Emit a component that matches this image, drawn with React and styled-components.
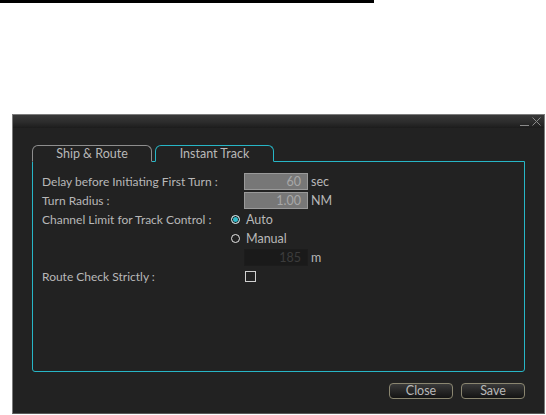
import React from "react";
import styled, { createGlobalStyle } from "styled-components";

const Global = createGlobalStyle`
  html, body { margin: 0; padding: 0; background: #ffffff; }
  body { font-family: Lato, "Noto Sans", sans-serif; }
`;

const Page = styled.div`
  width: 546px;
  height: 415px;
  display: flex;
  flex-direction: column;
`;

const TopRule = styled.div`
  width: 374px;
  height: 3px;
  background: #000;
`;

const Dialog = styled.div`
  margin: 111px 0 0 12px;
  width: 533px;
  height: 300px;
  box-sizing: border-box;
  border: 1px solid #7c7c7c;
  border-bottom-color: #5a5a5a;
  background: #222222;
  display: flex;
  flex-direction: column;
`;

const TitleBar = styled.div`
  height: 14px;
  background: linear-gradient(#383838, #2c2c2c 55%, #1c1c1c);
  display: flex;
  justify-content: flex-end;
  align-items: flex-end;
  gap: 3px;
  padding-right: 3px;
`;

const WinIcon = styled.svg`
  display: block;
  margin-bottom: 2px;
`;

const Body = styled.div`
  flex: 1;
  display: flex;
  flex-direction: column;
  padding: 17px 19px 14px 19px;
`;

const Tabs = styled.div`
  display: flex;
  gap: 3px;
  margin-bottom: -1px;
  position: relative;
  z-index: 1;
`;

const Tab = styled.div`
  width: ${(p) => p.$w}px;
  height: 15px;
  box-sizing: content-box;
  border: 1px solid ${(p) => (p.$active ? "#27b6c6" : "#8e8e8e")};
  border-bottom: 1px solid ${(p) => (p.$active ? "#222222" : "transparent")};
  border-radius: 6px 6px 0 0;
  background: #222222;
  color: #b8b8b8;
  font-size: 12.5px;
  line-height: 16px;
  text-align: center;
`;

const Panel = styled.div`
  height: 211px;
  box-sizing: border-box;
  border: 1px solid #27b6c6;
  border-radius: 0 0 3px 3px;
  padding: 10px 0 0 9px;
  display: flex;
  flex-direction: column;
`;

const Row = styled.div`
  display: flex;
  align-items: center;
  height: 19px;
`;

const Label = styled.div`
  width: 189px;
  color: #b8b8b8;
  font-size: 12px;
  white-space: nowrap;
`;

const Field = styled.div`
  height: 15px;
  width: 56px;
  margin-left: 13px;
  border: 1px solid ${(p) => (p.$dark ? "#1c1c1c" : "#9a9a9a")};
  background: ${(p) => (p.$dark ? "#1a1a1a" : "#777777")};
  color: ${(p) => (p.$dark ? "#3c3c3c" : "#a8a8a8")};
  font-size: 12.5px;
  line-height: 15px;
  text-align: right;
  padding-right: 6px;
  box-sizing: content-box;
`;

const Unit = styled.span`
  margin-left: 3px;
  color: #b8b8b8;
  font-size: 12.5px;
`;

const Radio = styled.span`
  width: 7px;
  height: 7px;
  border-radius: 50%;
  border: 1px solid #e6e6e6;
  background: ${(p) => (p.$on ? "#2fb8c8" : "transparent")};
  box-shadow: ${(p) => (p.$on ? "inset 0 0 0 1px #1a1a1a" : "none")};
  margin-right: 6px;
`;

const OptText = styled.span`
  color: #b8b8b8;
  font-size: 12.5px;
`;

const Check = styled.span`
  width: 9px;
  height: 9px;
  margin-left: 14px;
  border: 1px solid #d0d0d0;
`;

const Footer = styled.div`
  display: flex;
  justify-content: flex-end;
  gap: 8px;
  margin-top: 11px;
`;

const Button = styled.div`
  width: 62px;
  height: 14px;
  border: 1px solid #8a8670;
  border-radius: 4px;
  background: linear-gradient(#3a3a3a, #262626 50%, #141414);
  color: #b8b8b8;
  font-size: 12.5px;
  line-height: 14px;
  text-align: center;
`;

export default function App() {
  return (
    <Page>
      <Global />
      <TopRule />
      <Dialog>
        <TitleBar>
          <WinIcon width="9" height="9" viewBox="0 0 9 9">
            <line x1="0" y1="8.5" x2="9" y2="8.5" stroke="#8a8a8a" strokeWidth="1" />
          </WinIcon>
          <WinIcon width="9" height="9" viewBox="0 0 9 9">
            <path d="M0.5 0.5 L8.5 8.5 M8.5 0.5 L0.5 8.5" stroke="#8a8a8a" strokeWidth="1" />
          </WinIcon>
        </TitleBar>
        <Body>
          <Tabs>
            <Tab $w={118}>Ship &amp; Route</Tab>
            <Tab $w={117} $active>Instant Track</Tab>
          </Tabs>
          <Panel>
            <Row>
              <Label>Delay before Initiating First Turn :</Label>
              <Field>60</Field>
              <Unit>sec</Unit>
            </Row>
            <Row>
              <Label>Turn Radius :</Label>
              <Field>1.00</Field>
              <Unit>NM</Unit>
            </Row>
            <Row>
              <Label>Channel Limit for Track Control :</Label>
              <Radio $on />
              <OptText>Auto</OptText>
            </Row>
            <Row>
              <Label />
              <Radio />
              <OptText>Manual</OptText>
            </Row>
            <Row>
              <Label />
              <Field $dark>185</Field>
              <Unit>m</Unit>
            </Row>
            <Row>
              <Label>Route Check Strictly :</Label>
              <Check />
            </Row>
          </Panel>
          <Footer>
            <Button>Close</Button>
            <Button>Save</Button>
          </Footer>
        </Body>
      </Dialog>
    </Page>
  );
}
